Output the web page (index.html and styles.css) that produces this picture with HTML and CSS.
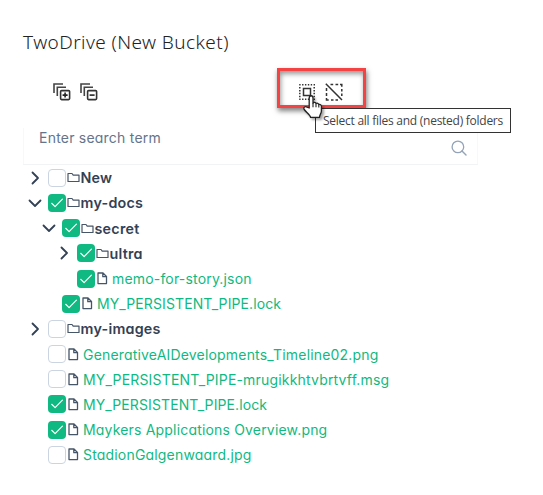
FILE: index.html
```html
<!DOCTYPE html>
<html lang="en">
<head>
<meta charset="utf-8">
<title>TwoDrive (New Bucket)</title>
<link rel="stylesheet" href="styles.css">
</head>
<body>
<svg class="defs" aria-hidden="true">
  <symbol id="right" viewBox="0 0 14 14"><path d="M4.5 1.5 10 7 4.5 12.5" fill="none" stroke="#334155" stroke-width="1.8" stroke-linecap="round" stroke-linejoin="round"/></symbol>
  <symbol id="down" viewBox="0 0 14 14"><path d="M1.5 4.5 7 10l5.500-5.500" fill="none" stroke="#334155" stroke-width="1.8" stroke-linecap="round" stroke-linejoin="round"/></symbol>
  <symbol id="folder" viewBox="0 0 13 13"><path d="M1 10V2.5h4l1.2 1.6H12V10.5H1z" fill="none" stroke="#475569" stroke-width="1.2" stroke-linejoin="round"/></symbol>
  <symbol id="file" viewBox="0 0 13 13"><path d="M2 1h5l3.5 3.5v7.1H2zM6.8 1v3.7h3.7" fill="none" stroke="#475569" stroke-width="1.3" stroke-linejoin="round"/></symbol>
  <symbol id="check" viewBox="0 0 18 18"><path d="m3.700 9.300 3.400 3.300 7.300-7.400" fill="none" stroke="#fff" stroke-width="1.2" stroke-linecap="round" stroke-linejoin="round"/></symbol>
</svg>
<main class="panel">
  <h1 class="title">TwoDrive (New Bucket)</h1>
  <div class="toolbar">
    <svg class="tool" viewBox="0 0 18 18"><path d="M1 10V1h9M4.3 13V4.3H13" fill="none" stroke="#444" stroke-width="1.6"/><rect x="7.6" y="7.6" width="9" height="9" rx="1" fill="none" stroke="#333" stroke-width="1.6"/><path d="M9.6 12.1h5M12.1 9.6v5" stroke="#222" stroke-width="1.6"/></svg>
    <svg class="tool" viewBox="0 0 18 18"><path d="M1 10V1h9M4.3 13V4.3H13" fill="none" stroke="#444" stroke-width="1.6"/><rect x="7.6" y="7.6" width="9" height="9" rx="1" fill="none" stroke="#333" stroke-width="1.6"/><path d="M9.6 12.1h5" stroke="#222" stroke-width="1.6"/></svg>
    <div class="selection">
      <svg class="tool" viewBox="0 0 18 18"><path d="M1.200 1.800h16M1.200 16.200h16M1.800 4.100v10.500M16.200 4.100v10.500" fill="none" stroke="#333" stroke-width="1.5" stroke-dasharray="1.4 1.48"/><rect x="5.5" y="5.5" width="7" height="7" fill="none" stroke="#333" stroke-width="1.5"/></svg>
      <svg class="tool" viewBox="0 0 18 18"><path d="M5.5 1.5h2.700M10.500 1.500h2.700M15 1.500h1.800v2.200M16.800 6v2.500M16.800 10.500V13M1.500 5v3M1.500 10v3M1.500 15v2h2.200M6 17h2.500M10.500 17H13M.8.8 17 17" fill="none" stroke="#333" stroke-width="1.5"/></svg>
      <div class="highlight"></div>
      <div class="tooltip">Select all files and (nested) folders</div>
      <svg class="cursor" viewBox="0 0 20 26"><path d="M6.2 14V4c0-3 3.8-3 3.8 0v5c.8-1 2.6-.8 3 .6 1-.8 2.500-.3 2.800 1 1.300-.5 2.600.3 2.600 1.900V17c0 2.400-1.700 3.300-1.900 6.400H7.600C7.300 20.800 3.400 18.500 1.200 15.500c-1.200-2.200 1.200-3.800 3-2.300z" fill="#fff" stroke="#222" stroke-width="1.3" stroke-linejoin="round"/><path d="M10 9v4.200M13 10v3.200M15.800 11v2.500" stroke="#222" stroke-width="1.1"/></svg>
    </div>
  </div>
  <div class="search"><span>Enter search term</span>
    <svg class="lens" viewBox="0 0 16 16"><circle cx="6.9" cy="6.9" r="5.8" fill="none" stroke="#94a3b8" stroke-width="1.3"/><path d="m11 11 4 4" stroke="#94a3b8" stroke-width="1.4" stroke-linecap="round"/></svg>
  </div>
  <ul class="tree">
    <li class="row"><svg class="toggle"><use href="#right"/></svg><span class="box"></span><svg class="icon"><use href="#folder"/></svg><b class="dir">New</b></li>
    <li class="row"><svg class="toggle"><use href="#down"/></svg><span class="box on"><svg><use href="#check"/></svg></span><svg class="icon"><use href="#folder"/></svg><b class="dir">my-docs</b></li>
    <li class="row l1"><svg class="toggle"><use href="#down"/></svg><span class="box on"><svg><use href="#check"/></svg></span><svg class="icon"><use href="#folder"/></svg><b class="dir">secret</b></li>
    <li class="row l2"><svg class="toggle"><use href="#right"/></svg><span class="box on"><svg><use href="#check"/></svg></span><svg class="icon"><use href="#folder"/></svg><b class="dir">ultra</b></li>
    <li class="row l2"><span class="toggle"></span><span class="box on"><svg><use href="#check"/></svg></span><svg class="icon"><use href="#file"/></svg><span class="file">memo-for-story.json</span></li>
    <li class="row l1"><span class="toggle"></span><span class="box on"><svg><use href="#check"/></svg></span><svg class="icon"><use href="#file"/></svg><span class="file caps">MY_PERSISTENT_PIPE.lock</span></li>
    <li class="row"><svg class="toggle"><use href="#right"/></svg><span class="box"></span><svg class="icon"><use href="#folder"/></svg><b class="dir">my-images</b></li>
    <li class="row"><span class="toggle"></span><span class="box"></span><svg class="icon"><use href="#file"/></svg><span class="file">GenerativeAIDevelopments_Timeline02.png</span></li>
    <li class="row"><span class="toggle"></span><span class="box"></span><svg class="icon"><use href="#file"/></svg><span class="file">MY_PERSISTENT_PIPE-mrugikkhtvbrtvff.msg</span></li>
    <li class="row"><span class="toggle"></span><span class="box on"><svg><use href="#check"/></svg></span><svg class="icon"><use href="#file"/></svg><span class="file caps">MY_PERSISTENT_PIPE.lock</span></li>
    <li class="row"><span class="toggle"></span><span class="box on"><svg><use href="#check"/></svg></span><svg class="icon"><use href="#file"/></svg><span class="file">Maykers Applications Overview.png</span></li>
    <li class="row"><span class="toggle"></span><span class="box"></span><svg class="icon"><use href="#file"/></svg><span class="file">StadionGalgenwaard.jpg</span></li>
  </ul>
</main>
</body>
</html>
```
FILE: styles.css
```css
* { box-sizing: border-box; }
body {
  margin: 0;
  background: #fff;
  font-family: Inter, "Liberation Sans", sans-serif;
  font-feature-settings: "cv11";
}
.defs { display: none; }
.panel { width: 455px; margin-left: 23px; padding-top: 28px; }
.title {
  margin: 0;
  height: 28px;
  font: 300 19px/28px "Noto Sans", "Open Sans", sans-serif;
  letter-spacing: .43px;
  color: #222;
  white-space: nowrap;
}
.toolbar { display: flex; gap: 9px; height: 72px; padding: 27px 0 0 30px; }
.tool { width: 18px; height: 18px; flex: none; }
.selection { position: relative; display: flex; gap: 9px; margin-left: 191px; }
.highlight {
  position: absolute;
  left: -21px;
  top: -15px;
  width: 89px;
  height: 40px;
  border: 3px solid #f44343;
  box-shadow: 1px 3px 5px rgba(0, 0, 0, .5), inset 1px 3px 5px rgba(0, 0, 0, .4);
}
.tooltip {
  position: absolute;
  left: 17px;
  top: 25px;
  width: 196px;
  height: 25px;
  border: 1px solid #333;
  background: #fff;
  padding-left: 7px;
  font: 12px/24px "Open Sans", "Noto Sans", sans-serif;
  letter-spacing: -.26px;
  color: #444;
  white-space: nowrap;
}
.cursor {
  position: absolute;
  left: 5px;
  top: 11px;
  width: 20px;
  height: 26px;
  filter: drop-shadow(2px 2px 1px rgba(0, 0, 0, .35));
}
.search {
  display: flex;
  justify-content: space-between;
  height: 37px;
  padding: 0 10px 0 15px;
  border-bottom: 1px solid #f1f3f5;
  border-left: 1px solid #f7f8f9;
  border-right: 1px solid #f7f8f9;
  font-size: 14px;
  line-height: 20px;
  letter-spacing: .22px;
  color: #64748b;
}
.lens { width: 16px; height: 16px; margin-top: 12px; }
.tree { list-style: none; margin: 0; padding: .2px 0 0; }
.row { display: flex; align-items: center; height: 25.2px; font-size: 14px; white-space: nowrap; }
.l1 { padding-left: 14px; }
.l2 { padding-left: 29px; }
.toggle { width: 14px; height: 14px; margin: 0 6px 0 5px; flex: none; }
.box {
  width: 18px;
  height: 18px;
  flex: none;
  border: 1px solid #cbd5e1;
  border-radius: 4px;
}
.box svg { display: block; width: 18px; height: 18px; }
.on { border: 0; background: #10b981; }
.icon { width: 13px; height: 13px; margin-left: 1px; flex: none; }
.dir { margin-left: .5px; font-weight: 600; font-size: 14.3px; letter-spacing: .25px; color: #334155; }
.file { margin-left: 3px; letter-spacing: .18px; color: #10b981; }
.caps { letter-spacing: .1px; }
```
